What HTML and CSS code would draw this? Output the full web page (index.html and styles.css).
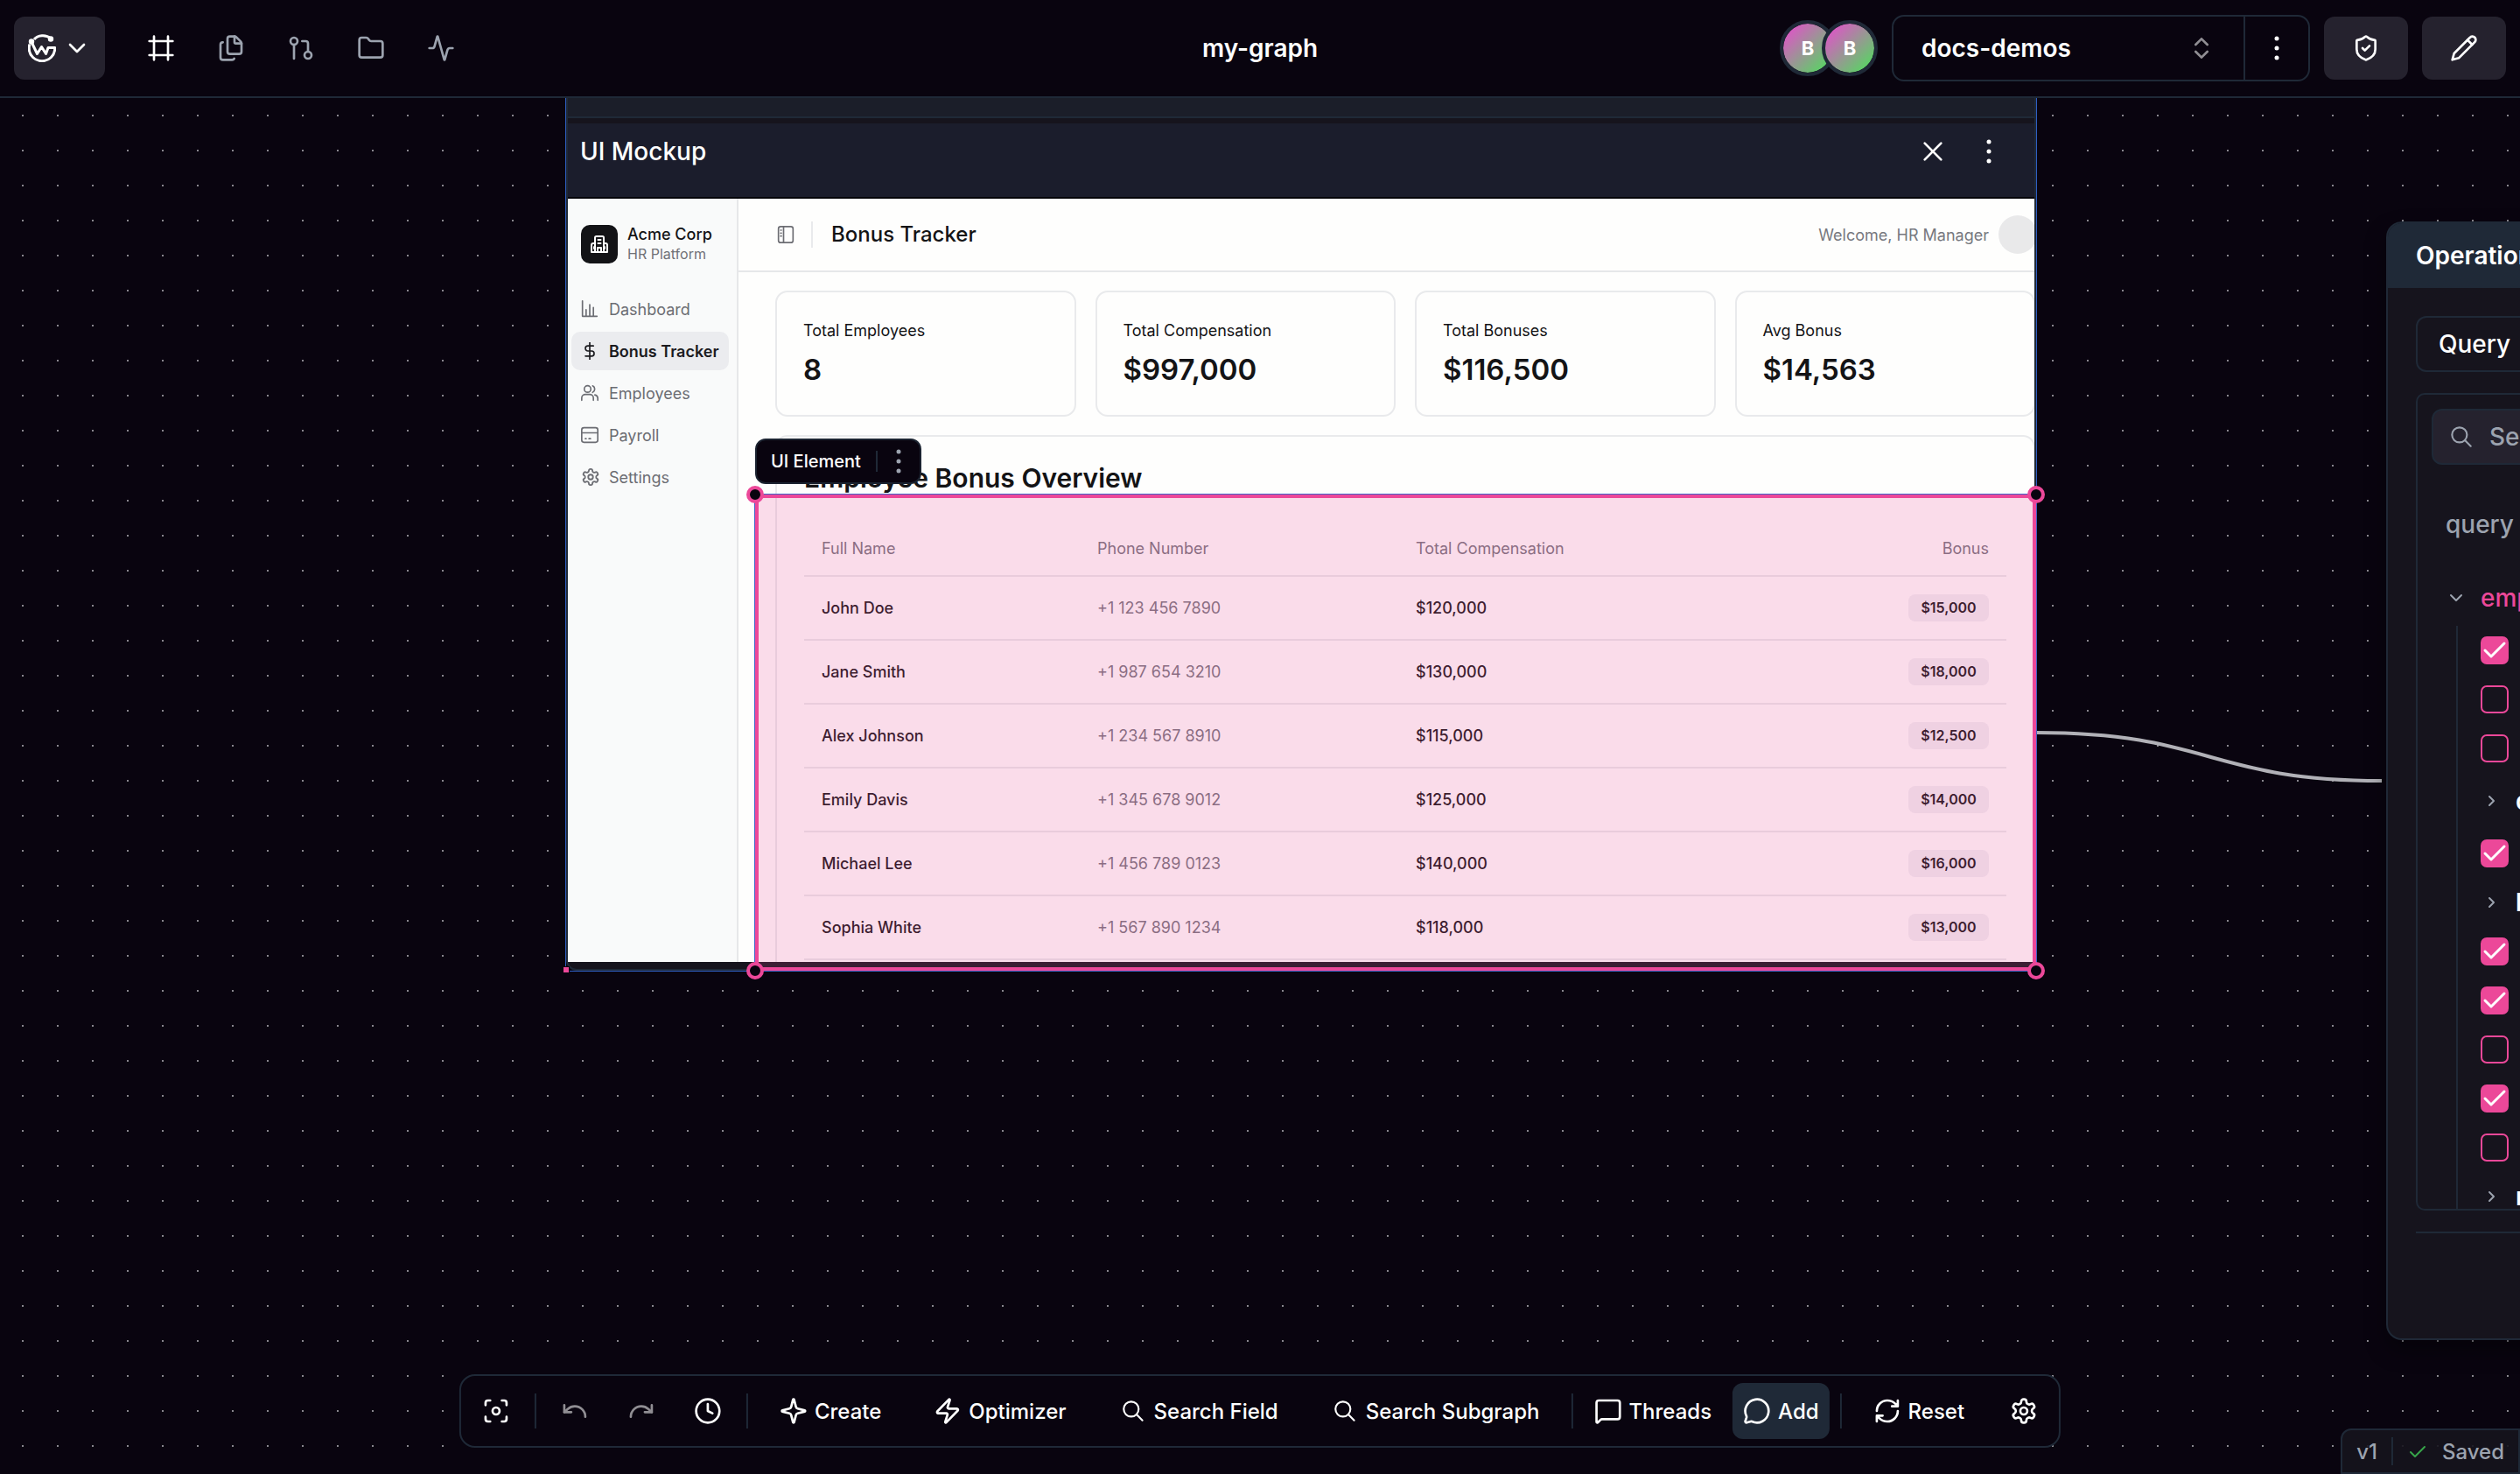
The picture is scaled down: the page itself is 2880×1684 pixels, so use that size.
FILE: index.html
```html
<!DOCTYPE html>
<html lang="en">
<head>
<meta charset="UTF-8">
<meta name="viewport" content="width=device-width, initial-scale=1.0">
<title>my-graph</title>
<link rel="stylesheet" href="styles.css">
</head>
<body>

<svg class="sprite" aria-hidden="true">
    <symbol id="i-search" viewBox="0 0 15 15"><circle cx="6.5" cy="6.5" r="4"/><path d="m9.4 9.4 3.1 3.1"/></symbol>
    <symbol id="i-down" viewBox="0 0 24 24"><path d="m6 9 6 6 6-6"/></symbol>
    <symbol id="i-right" viewBox="0 0 24 24"><path d="m10 7 5 5-5 5"/></symbol>
    <symbol id="i-dots" viewBox="0 0 32 32"><circle cx="16" cy="5" r="2.5"/><circle cx="16" cy="16" r="2.5"/><circle cx="16" cy="27" r="2.5"/></symbol>
    <symbol id="i-gear" viewBox="0 0 24 24"><path d="M12.22 2h-.44a2 2 0 0 0-2 2v.18a2 2 0 0 1-1 1.73l-.43.25a2 2 0 0 1-2 0l-.15-.08a2 2 0 0 0-2.73.73l-.22.38a2 2 0 0 0 .73 2.73l.15.1a2 2 0 0 1 1 1.72v.51a2 2 0 0 1-1 1.74l-.15.09a2 2 0 0 0-.73 2.73l.22.38a2 2 0 0 0 2.73.73l.15-.08a2 2 0 0 1 2 0l.43.25a2 2 0 0 1 1 1.73V20a2 2 0 0 0 2 2h.44a2 2 0 0 0 2-2v-.18a2 2 0 0 1 1-1.73l.43-.25a2 2 0 0 1 2 0l.15.08a2 2 0 0 0 2.73-.73l.22-.39a2 2 0 0 0-.73-2.73l-.15-.08a2 2 0 0 1-1-1.74v-.5a2 2 0 0 1 1-1.74l.15-.09a2 2 0 0 0 .73-2.73l-.22-.38a2 2 0 0 0-2.73-.73l-.15.08a2 2 0 0 1-2 0l-.43-.25a2 2 0 0 1-1-1.73V4a2 2 0 0 0-2-2z"/><circle cx="12" cy="12" r="3"/></symbol>
</svg>

<header class="topbar">
    <div class="topbar-left">
        <button class="btn logo-btn" aria-label="Menu">
            <svg class="icon logo" viewBox="0 0 32 32"><path d="M7 6C11 1 20.500 0 26 5"/><path d="M4 9 10.500 22.500 15.500 14.500 20.500 22.500 23 15.500H30.800C30.800 24.500 24 30.700 16 30.700S1.200 24.500 1.200 16Q1.200 13.500 2 11.500"/><circle class="fill" cx="4" cy="8.500" r="2.200"/><circle class="fill" cx="26" cy="5.500" r="2.200"/></svg>
            <svg class="icon"><use href="#i-down"/></svg>
        </button>
        <nav class="tools">
            <a class="tool active" href="#" aria-label="Canvas"><svg class="icon" viewBox="0 0 24 24"><path d="M22 6H2M22 18H2M6 2v20M18 2v20"/></svg></a>
            <a class="tool" href="#" aria-label="Documents"><svg class="icon" viewBox="0 0 24 24"><path d="M15 2h-4a2 2 0 0 0-2 2v11a2 2 0 0 0 2 2h8a2 2 0 0 0 2-2V8"/><path d="M16.706 2.706A2.400 2.400 0 0 0 15 2v5a1 1 0 0 0 1 1h5a2.400 2.400 0 0 0-.706-1.706z"/><path d="M5 7a2 2 0 0 0-2 2v11a2 2 0 0 0 2 2h8a2 2 0 0 0 1.732-1"/></svg></a>
            <a class="tool" href="#" aria-label="Proposals"><svg class="icon" viewBox="0 0 24 24"><circle cx="18" cy="18" r="3"/><circle cx="6" cy="6" r="3"/><path d="M13 6h3a2 2 0 0 1 2 2v7M6 9v12"/></svg></a>
            <a class="tool" href="#" aria-label="Files"><svg class="icon" viewBox="0 0 24 24"><path d="M20 20a2 2 0 0 0 2-2V8a2 2 0 0 0-2-2h-7.900a2 2 0 0 1-1.690-.9L9.600 3.900A2 2 0 0 0 7.930 3H4a2 2 0 0 0-2 2v13a2 2 0 0 0 2 2Z"/></svg></a>
            <a class="tool" href="#" aria-label="Activity"><svg class="icon" viewBox="0 0 24 24"><path d="M22 12h-2.480a2 2 0 0 0-1.930 1.460l-2.350 8.360a.25.25 0 0 1-.48 0L9.240 2.180a.25.25 0 0 0-.48 0l-2.350 8.360A2 2 0 0 1 4.490 12H2"/></svg></a>
        </nav>
    </div>

    <h1 class="graph-name">my-graph</h1>

    <div class="topbar-right">
        <div class="avatars">
            <span class="avatar">B</span>
            <span class="avatar">B</span>
        </div>
        <div class="env">
            <div class="env-select">
                <select aria-label="Environment"><option>docs-demos</option></select>
                <svg class="icon" viewBox="0 0 24 24"><path d="m7 15 5 5 5-5M7 9l5-5 5 5"/></svg>
            </div>
            <button class="env-more" aria-label="Environment options"><svg class="icon dots"><use href="#i-dots"/></svg></button>
        </div>
        <button class="btn square" aria-label="Checks"><svg class="icon" viewBox="0 0 24 24"><path d="M20 13c0 5-3.500 7.500-7.660 8.950a1 1 0 0 1-.67-.01C7.500 20.500 4 18 4 13V6a1 1 0 0 1 1-1c2 0 4.500-1.200 6.240-2.720a1.170 1.170 0 0 1 1.520 0C14.510 3.810 17 5 19 5a1 1 0 0 1 1 1z"/><path d="m9 12 2 2 4-4"/></svg></button>
        <button class="btn square" aria-label="Edit"><svg class="icon" viewBox="0 0 24 24"><path d="M17 3a2.850 2.830 0 1 1 4 4L7.500 20.500 2 22l1.500-5.500Z"/><path d="m15 5 4 4"/></svg></button>
    </div>
</header>

<main class="canvas">

    <svg class="edges" aria-hidden="true"><path d="M2328 725C2525 725 2525 780 2722 780"/></svg>

    <!-- UI mockup node -->
    <section class="node mockup-node">
        <div class="mockup-frame">
            <div class="mockup-strip"></div>
            <div class="mockup-title">
                <h2>UI Mockup</h2>
                <button aria-label="Close"><svg class="icon" viewBox="0 0 24 24"><path d="m5 5 14 14M19 5 5 19"/></svg></button>
                <button aria-label="More"><svg class="icon dots"><use href="#i-dots"/></svg></button>
            </div>

            <div class="app">
                <aside class="sidebar">
                    <div class="brand">
                        <span class="brand-icon"><svg class="icon" viewBox="0 0 24 24"><path d="M7 21V4.500A1.500 1.500 0 0 1 8.500 3h7A1.500 1.500 0 0 1 17 4.500V21M7 11H5a2 2 0 0 0-2 2v8h18v-8a2 2 0 0 0-2-2h-2M10.500 7h3M10.500 11h3M10 21v-5h4v5M6 15v2M18 15v2"/></svg></span>
                        <div>
                            <strong>Acme Corp</strong>
                            <small>HR Platform</small>
                        </div>
                    </div>
                    <nav class="menu">
                        <a href="#"><svg class="icon" viewBox="0 0 24 24"><path d="M2 1v21h20M7 22V13M12 22V6M17 22V10"/></svg>Dashboard</a>
                        <a href="#" class="current"><svg class="icon" viewBox="0 0 24 24"><path d="M12 0v24M17 5H9.500a3.500 3.500 0 0 0 0 7h5a3.500 3.500 0 0 1 0 7H6"/></svg>Bonus Tracker</a>
                        <a href="#"><svg class="icon" viewBox="0 0 24 24"><path d="M17 22v-3a5 5 0 0 0-5-5H6a5 5 0 0 0-5 5v3M23 22v-3a5 5 0 0 0-4-4.500M16 2.200a5 5 0 0 1 0 9"/><circle cx="9" cy="6.500" r="4.500"/></svg>Employees</a>
                        <a href="#"><svg class="icon" viewBox="0 0 24 24"><rect x="1" y="2" width="22" height="20" rx="3"/><path d="M1 9h22M6 17h1M11 17h2"/></svg>Payroll</a>
                        <a href="#"><svg class="icon gear"><use href="#i-gear"/></svg>Settings</a>
                    </nav>
                </aside>

                <div class="content">
                    <div class="content-head">
                        <svg class="icon" viewBox="0 0 24 24"><rect x="2" y="1" width="20" height="22" rx="3"/><path d="M9 1v22M5 6h1M5 10h1M5 14h1"/></svg>
                        <h3>Bonus Tracker</h3>
                        <span class="welcome">Welcome, HR Manager</span>
                        <span class="user"></span>
                    </div>

                    <div class="stats">
                        <div class="stat"><span>Total Employees</span><b>8</b></div>
                        <div class="stat"><span>Total Compensation</span><b>$997,000</b></div>
                        <div class="stat"><span>Total Bonuses</span><b>$116,500</b></div>
                        <div class="stat"><span>Avg Bonus</span><b>$14,563</b></div>
                    </div>

                    <div class="overview">
                        <h3>Employee Bonus Overview</h3>
                        <table>
                            <thead>
                                <tr><th class="col-name">Full Name</th><th class="col-phone">Phone Number</th><th>Total Compensation</th><th class="right">Bonus</th></tr>
                            </thead>
                            <tbody>
                                <tr><td>John Doe</td><td class="phone">+1 123 456 7890</td><td>$120,000</td><td class="right"><span class="badge">$15,000</span></td></tr>
                                <tr><td>Jane Smith</td><td class="phone">+1 987 654 3210</td><td>$130,000</td><td class="right"><span class="badge">$18,000</span></td></tr>
                                <tr><td>Alex Johnson</td><td class="phone">+1 234 567 8910</td><td>$115,000</td><td class="right"><span class="badge">$12,500</span></td></tr>
                                <tr><td>Emily Davis</td><td class="phone">+1 345 678 9012</td><td>$125,000</td><td class="right"><span class="badge">$14,000</span></td></tr>
                                <tr><td>Michael Lee</td><td class="phone">+1 456 789 0123</td><td>$140,000</td><td class="right"><span class="badge">$16,000</span></td></tr>
                                <tr><td>Sophia White</td><td class="phone">+1 567 890 1234</td><td>$118,000</td><td class="right"><span class="badge">$13,000</span></td></tr>
                            </tbody>
                        </table>
                    </div>
                </div>
            </div>
        </div>
        <i class="corner"></i>
    </section>

    <!-- selected area on top of the mockup -->
    <div class="selection">
        <i class="handle tl"></i>
        <i class="handle tr"></i>
        <i class="handle bl"></i>
        <i class="handle br"></i>
    </div>
    <div class="element-tag">
        <span>UI Element</span>
        <button aria-label="Element options"><svg class="icon dots"><use href="#i-dots"/></svg></button>
    </div>

    <!-- operations node -->
    <section class="node ops">
        <h2>Operations</h2>
        <div class="ops-body">
            <select class="ops-type" aria-label="Operation type"><option>Query</option></select>
            <div class="tree">
                <label class="search"><svg class="icon"><use href="#i-search"/></svg><input type="text" placeholder="Search" aria-label="Search fields"></label>
                <p class="root">query</p>
                <div class="row parent"><svg class="icon"><use href="#i-down"/></svg>employees</div>
                <div class="children">
                    <div class="row"><input type="checkbox" aria-label="currentMood" checked></div>
                    <div class="row"><input type="checkbox" aria-label="derivedMood"></div>
                    <div class="row"><input type="checkbox" aria-label="departments"></div>
                    <div class="row tall"><svg class="icon"><use href="#i-right"/></svg>details</div>
                    <div class="row"><input type="checkbox" aria-label="expertise" checked></div>
                    <div class="row"><svg class="icon"><use href="#i-right"/></svg>hobbies</div>
                    <div class="row"><input type="checkbox" aria-label="id" checked></div>
                    <div class="row"><input type="checkbox" aria-label="isAvailable" checked></div>
                    <div class="row"><input type="checkbox" aria-label="isLeadDeveloper"></div>
                    <div class="row"><input type="checkbox" aria-label="notes" checked></div>
                    <div class="row"><input type="checkbox" aria-label="products"></div>
                    <div class="row"><svg class="icon"><use href="#i-right"/></svg>role</div>
                </div>
            </div>
            <hr>
        </div>
    </section>

    <div class="toolbar">
        <button class="icon-only" aria-label="Fit view"><svg class="icon" viewBox="0 0 24 24"><circle cx="12" cy="12" r="3"/><path d="M3 7V5a2 2 0 0 1 2-2h2M17 3h2a2 2 0 0 1 2 2v2M21 17v2a2 2 0 0 1-2 2h-2M7 21H5a2 2 0 0 1-2-2v-2"/></svg></button>
        <span class="sep"></span>
        <button class="icon-only" aria-label="Undo" disabled><svg class="icon" viewBox="0 0 24 24"><path d="M3 7v6h6"/><path d="M21 17a9 9 0 0 0-9-9 9 9 0 0 0-6 2.300L3 13"/></svg></button>
        <button class="icon-only" aria-label="Redo" disabled><svg class="icon" viewBox="0 0 24 24"><path d="M21 7v6h-6"/><path d="M3 17a9 9 0 0 1 9-9 9 9 0 0 1 6 2.300l3 2.700"/></svg></button>
        <button class="icon-only" aria-label="History"><svg class="icon" viewBox="0 0 24 24"><circle cx="12" cy="12" r="10"/><path d="M12 6v6l4 2"/></svg></button>
        <span class="sep"></span>
        <button><svg class="icon" viewBox="0 0 24 24"><path d="M9.937 15.500A2 2 0 0 0 8.500 14.063l-6.135-1.582a.5.5 0 0 1 0-.962L8.500 9.936A2 2 0 0 0 9.937 8.500l1.582-6.135a.5.5 0 0 1 .963 0L14.063 8.500A2 2 0 0 0 15.500 9.937l6.135 1.581a.5.5 0 0 1 0 .964L15.500 14.063a2 2 0 0 0-1.437 1.437l-1.582 6.135a.5.5 0 0 1-.963 0z"/></svg>Create</button>
        <button><svg class="icon" viewBox="0 0 24 24"><path d="M4 14a1 1 0 0 1-.78-1.630l9.900-10.200a.5.5 0 0 1 .86.460l-1.920 6.020A1 1 0 0 0 13 10h7a1 1 0 0 1 .78 1.630l-9.900 10.200a.5.5 0 0 1-.86-.460l1.920-6.020A1 1 0 0 0 11 14z"/></svg>Optimizer</button>
        <button><svg class="icon thin"><use href="#i-search"/></svg>Search Field</button>
        <button><svg class="icon thin"><use href="#i-search"/></svg>Search Subgraph</button>
        <span class="sep"></span>
        <button class="compact"><svg class="icon" viewBox="0 0 24 24"><path d="M22 17a2 2 0 0 1-2 2H6.828a2 2 0 0 0-1.414.586l-2.202 2.202A.71.71 0 0 1 2 21.286V5a2 2 0 0 1 2-2h16a2 2 0 0 1 2 2z"/></svg>Threads</button>
        <button class="compact on"><svg class="icon" viewBox="0 0 24 24"><path d="M2.992 16.342a2 2 0 0 1 .094 1.167l-1.065 3.290a1 1 0 0 0 1.236 1.168l3.413-.998a2 2 0 0 1 1.099.092 10 10 0 1 0-4.777-4.719"/></svg>Add</button>
        <span class="sep"></span>
        <button><svg class="icon" viewBox="0 0 24 24"><path d="M3 12a9 9 0 0 1 9-9 9.750 9.750 0 0 1 6.740 2.740L21 8M21 3v5h-5M21 12a9 9 0 0 1-9 9 9.750 9.750 0 0 1-6.740-2.740L3 16M8 16H3v5"/></svg>Reset</button>
        <button class="icon-only" aria-label="Settings"><svg class="icon"><use href="#i-gear"/></svg></button>
    </div>

    <div class="status">
        <span>v1</span>
        <span class="sep"></span>
        <svg class="icon" viewBox="0 0 24 24"><path d="m4 13 5 5L20 7"/></svg>
        <span>Saved</span>
    </div>
</main>

</body>
</html>
```
FILE: styles.css
```css
* {
    box-sizing: border-box;
}

body {
    margin: 0;
    height: 100vh;
    display: grid;
    grid-template-rows: auto 1fr;
    overflow: hidden;
    background-color: #09040f;
    color: #fff;
    font-family: Inter, sans-serif;
    font-size: 28px;
    font-weight: 500;
}

h1, h2, h3, p {
    margin: 0;
    font-size: inherit;
    font-weight: inherit;
}

a {
    color: inherit;
    text-decoration: none;
}

button, select, input {
    margin: 0;
    padding: 0;
    border: none;
    background: none;
    color: inherit;
    font: inherit;
    appearance: none;
}

button {
    display: flex;
    align-items: center;
    justify-content: center;
    cursor: pointer;
}

.sprite {
    position: absolute;
    width: 0;
    height: 0;
}

.icon {
    width: 32px;
    height: 32px;
    flex: none;
    fill: none;
    stroke: currentColor;
    stroke-width: 2;
    stroke-linecap: round;
    stroke-linejoin: round;
}

.icon.dots {
    fill: currentColor;
    stroke: none;
}

.icon.thin {
    stroke-width: 1;
}

/* top bar */
.topbar {
    display: grid;
    grid-template-columns: 1fr auto 1fr;
    align-items: center;
    height: 112px;
    padding: 0 16px;
    border-bottom: 2px solid #1f2937;
}

.topbar-left, .topbar-right, .tools, .avatars {
    display: flex;
    align-items: center;
}

.topbar-left {
    gap: 28px;
}

.topbar-right {
    justify-content: flex-end;
    gap: 16px;
}

.graph-name {
    font-weight: 600;
}

.btn {
    height: 72px;
    border-radius: 12px;
    background-color: #25222e;
}

.square {
    width: 96px;
}

.logo-btn {
    gap: 8px;
    padding: 0 16px;
}

.logo {
    stroke-width: 3;
    stroke-linecap: butt;
}

.logo .fill {
    fill: currentColor;
    stroke-width: 2;
}

.tools {
    gap: 8px;
}

.tool {
    display: flex;
    align-items: center;
    justify-content: center;
    width: 72px;
    height: 48px;
    color: #9ca3af;
}

.tool.active {
    color: #fff;
}

.avatar {
    display: flex;
    align-items: center;
    justify-content: center;
    width: 64px;
    height: 64px;
    border: 4px solid #1f2937;
    border-radius: 50%;
    background: linear-gradient(135deg, #ee46d3, #46e556) padding-box;
    font-size: 22px;
    font-weight: 700;
}

.avatar + .avatar {
    margin-left: -16px;
}

.env {
    display: flex;
    height: 76px;
    border: 2px solid #1f2937;
    border-radius: 14px;
}

.env-select {
    display: grid;
    align-items: center;
    width: 400px;
}

.env-select select {
    grid-area: 1 / 1;
    height: 72px;
    padding-left: 32px;
    font-weight: 600;
}

.env-select .icon {
    grid-area: 1 / 1;
    justify-self: end;
    margin-right: 32px;
    pointer-events: none;
    opacity: 0.55;
}

.env-more {
    width: 74px;
    border-left: 2px solid #1f2937;
}

/* canvas */
.canvas {
    position: relative;
    overflow: hidden;
    background-image: radial-gradient(circle, #89868e 1px, transparent 1px);
    background-size: 40px 40px;
    background-position: 6px 0;
}

.edges {
    position: absolute;
    left: 0;
    top: 0;
    width: 100%;
    height: 100%;
    fill: none;
    stroke: #b1b1b7;
    stroke-width: 4;
}

.node {
    position: absolute;
}

.mockup-node {
    left: 646px;
    top: 0;
    width: 1682px;
    border: 1px solid #2f5fc4;
    border-top: none;
}

.mockup-frame {
    border: 2px solid #1f2937;
    border-top: none;
    border-radius: 0 0 12px 12px;
    background-color: #16141d;
    padding-bottom: 8px;
    overflow: hidden;
}

.mockup-strip {
    height: 23px;
    margin-bottom: 6px;
    border-bottom: 2px solid #1f2937;
    background-color: #1b1e29;
}

.mockup-title {
    display: flex;
    align-items: center;
    height: 86px;
    padding: 0 36px 20px 14px;
    border-bottom: 2px solid #05050a;
    background-color: #1b1d2c;
}

.mockup-title h2 {
    flex: 1;
}

.mockup-title button {
    margin-left: 32px;
}

.corner {
    position: absolute;
    left: -4px;
    bottom: -3px;
    width: 8px;
    height: 8px;
    background-color: #ec4899;
    border: 1px solid #09040f;
}

/* HR app inside the mockup */
.app {
    display: flex;
    height: 872px;
    overflow: hidden;
    background-color: #fefefd;
    color: #141416;
    font-size: 18px;
}

.sidebar {
    width: 195px;
    padding: 30px 9px 0 4px;
    border-right: 2px solid #e6e7e9;
    background-color: #f9fafa;
}

.brand {
    display: flex;
    gap: 11px;
    padding-left: 11px;
    line-height: 22px;
}

.brand-icon {
    display: flex;
    align-items: center;
    justify-content: center;
    width: 42px;
    height: 44px;
    border-radius: 10px;
    background-color: #131316;
    color: #fff;
}

.brand-icon .icon {
    width: 24px;
    height: 26px;
}

.menu .icon, .content-head .icon {
    width: 20px;
    height: 20px;
}

.menu .gear {
    width: 22px;
    height: 24px;
    margin-right: -2px;
}

.brand strong, .brand small {
    display: block;
    font-weight: 500;
    font-size: 18px;
}

.brand small {
    font-weight: 400;
    font-size: 16px;
    color: #707177;
}

.menu {
    display: grid;
    gap: 4px;
    margin-top: 30px;
}

.menu a {
    display: flex;
    align-items: center;
    gap: 12px;
    height: 44px;
    padding-left: 11px;
    border-radius: 10px;
    font-weight: 400;
    color: #6c6d73;
}

.menu .current {
    background-color: #ebecef;
    color: #1b1b1f;
    font-weight: 600;
}

.content {
    flex: 1;
    min-width: 0;
}

.content-head {
    display: flex;
    align-items: center;
    height: 84px;
    padding-left: 44px;
    border-bottom: 2px solid #e6e7e9;
}

.content-head .icon {
    color: #6c6d73;
}

.content-head h3 {
    flex: 1;
    margin-left: 19px;
    padding-left: 21px;
    border-left: 2px solid #e9eaec;
    font-size: 24px;
    line-height: 30px;
}

.welcome {
    font-weight: 400;
    color: #77787f;
}

.user {
    width: 44px;
    height: 44px;
    margin: 0 -3px 0 11px;
    border-radius: 50%;
    background-color: #e9e9ea;
}

.stats {
    display: grid;
    grid-template-columns: repeat(4, 1fr);
    gap: 22px;
    margin: 21px -1px 21px 42px;
}

.stat {
    display: grid;
    gap: 12px;
    height: 144px;
    padding: 32px 30px;
    border: 2px solid #e9eaec;
    border-radius: 14px;
    font-weight: 400;
    line-height: 24px;
}

.stat b {
    font-size: 33px;
    font-weight: 600;
    line-height: 40px;
}

.overview {
    height: 620px;
    margin: 0 -1px 0 42px;
    padding: 27px 31px 0;
    border: 2px solid #e9eaec;
    border-radius: 14px;
}

.overview h3 {
    font-size: 30px;
    font-weight: 600;
    line-height: 40px;
}

table {
    width: 100%;
    margin-top: 29px;
    border-spacing: 0;
    table-layout: fixed;
}

th, td {
    height: 73px;
    padding: 0 20px;
    border-bottom: 2px solid #e9eaec;
    text-align: left;
}

th {
    height: 64px;
    font-weight: 400;
    color: #75767d;
}

.col-name {
    width: 315px;
}

.col-phone {
    width: 364px;
}

.phone {
    font-weight: 400;
    color: #75767d;
}

.right {
    text-align: right;
}

.badge {
    display: inline-block;
    width: 92px;
    border-radius: 8px;
    background-color: #f0f0f3;
    font-size: 16px;
    font-weight: 600;
    line-height: 31px;
    text-align: center;
}

/* selection */
.selection {
    position: absolute;
    left: 862px;
    top: 452px;
    width: 1466px;
    height: 546px;
    border: 5px solid #ec4899;
    outline: 1px solid #3f63c8;
    outline-offset: -1px;
    background-color: rgba(236, 72, 153, 0.19);
    background-clip: padding-box;
}

.handle {
    position: absolute;
    width: 20px;
    height: 20px;
    border: 4px solid #ec4899;
    border-radius: 50%;
    background-color: #09040f;
}

.tl, .tr {
    top: -14px;
}

.bl, .br {
    bottom: -14px;
}

.tl, .bl {
    left: -14px;
}

.tr, .br {
    right: -14px;
}

.element-tag {
    position: absolute;
    left: 863px;
    top: 389px;
    display: flex;
    align-items: center;
    height: 52px;
    padding-left: 16px;
    border: 2px solid #1b2330;
    border-radius: 12px;
    background-color: #09040f;
    font-size: 20px;
}

.element-tag button {
    width: 50px;
    height: 24px;
    margin-left: 17px;
    border-left: 2px solid #1f2937;
    color: #9ca3af;
}

/* operations */
.ops {
    left: 2727px;
    top: 141px;
    width: 720px;
    height: 1278px;
    border: 2px solid #1f2937;
    border-radius: 18px;
    background-color: #16141d;
    overflow: hidden;
    box-shadow: 0 12px 24px rgba(0, 0, 0, 0.4);
}

.ops h2 {
    height: 74px;
    padding-left: 32px;
    background-color: #1f2937;
    font-weight: 600;
    line-height: 74px;
}

.ops-body {
    padding: 32px;
}

.ops-type {
    width: 100%;
    height: 64px;
    padding-left: 24px;
    border: 2px solid #1f2937;
    border-radius: 12px;
}

.tree {
    height: 934px;
    margin: 24px 0;
    padding: 16px;
    border: 2px solid #1f2937;
    border-radius: 10px;
    overflow: hidden;
}

.search {
    display: flex;
    align-items: center;
    gap: 16px;
    height: 64px;
    padding-left: 16px;
    border: 2px solid #1f2937;
    border-radius: 12px;
    background-color: #25222e;
    color: #9ca3af;
}

.search .icon {
    stroke-width: 1;
}

.search input::placeholder {
    color: #9ca3af;
    opacity: 1;
}

.root {
    margin: 48px 0 32px;
    padding-left: 16px;
    line-height: 40px;
    color: #9ca3af;
}

.row {
    display: flex;
    align-items: center;
    gap: 16px;
    height: 56px;
    font-weight: 600;
}

.row.tall, .row.parent {
    height: 64px;
}

.row .icon {
    width: 24px;
    height: 24px;
    color: #9ca3af;
}

.row.parent {
    padding-left: 16px;
    color: #ec4899;
    font-weight: 500;
}

.children {
    margin-left: 28px;
    padding-left: 26px;
    border-left: 2px solid #1f2937;
}

.row input {
    width: 32px;
    height: 32px;
    border: 2px solid #ec4899;
    border-radius: 7px;
}

.row input:checked {
    background: #ec4899 url("data:image/svg+xml,%3Csvg xmlns='http://www.w3.org/2000/svg' viewBox='0 0 28 28'%3E%3Cpath d='M3 14l7 7L25 6' fill='none' stroke='white' stroke-width='3' stroke-linecap='round' stroke-linejoin='round'/%3E%3C/svg%3E") center / 28px no-repeat;
}

.ops hr {
    margin: 0;
    border: none;
    border-top: 2px solid #1f2937;
}

/* bottom toolbar */
.toolbar {
    position: absolute;
    left: 50%;
    bottom: 30px;
    transform: translateX(-50%);
    display: flex;
    align-items: center;
    gap: 12px;
    height: 84px;
    padding: 0 8px;
    border: 2px solid #1f2937;
    border-radius: 18px;
    background-color: #09040f;
    font-size: 24px;
    white-space: nowrap;
}

.toolbar button {
    gap: 8px;
    height: 64px;
    padding: 0 24px;
    border-radius: 12px;
}

.toolbar .icon-only {
    width: 64px;
    padding: 0;
}

.toolbar .compact {
    padding: 0 12px;
}

.toolbar .on {
    background-color: #1f2937;
}

.toolbar button:disabled {
    opacity: 0.55;
}

.sep {
    width: 2px;
    height: 40px;
    background-color: #1f2937;
}

/* save status */
.status {
    position: absolute;
    right: 0;
    bottom: 0;
    display: flex;
    align-items: center;
    gap: 16px;
    height: 52px;
    padding: 0 16px;
    border: 2px solid #1f2937;
    border-top-left-radius: 12px;
    background-color: rgba(22, 20, 29, 0.9);
    color: #9ca3af;
    font-size: 24px;
}

.status .sep {
    height: 32px;
}

.status .icon {
    width: 24px;
    height: 24px;
    color: #37a34a;
}
```
